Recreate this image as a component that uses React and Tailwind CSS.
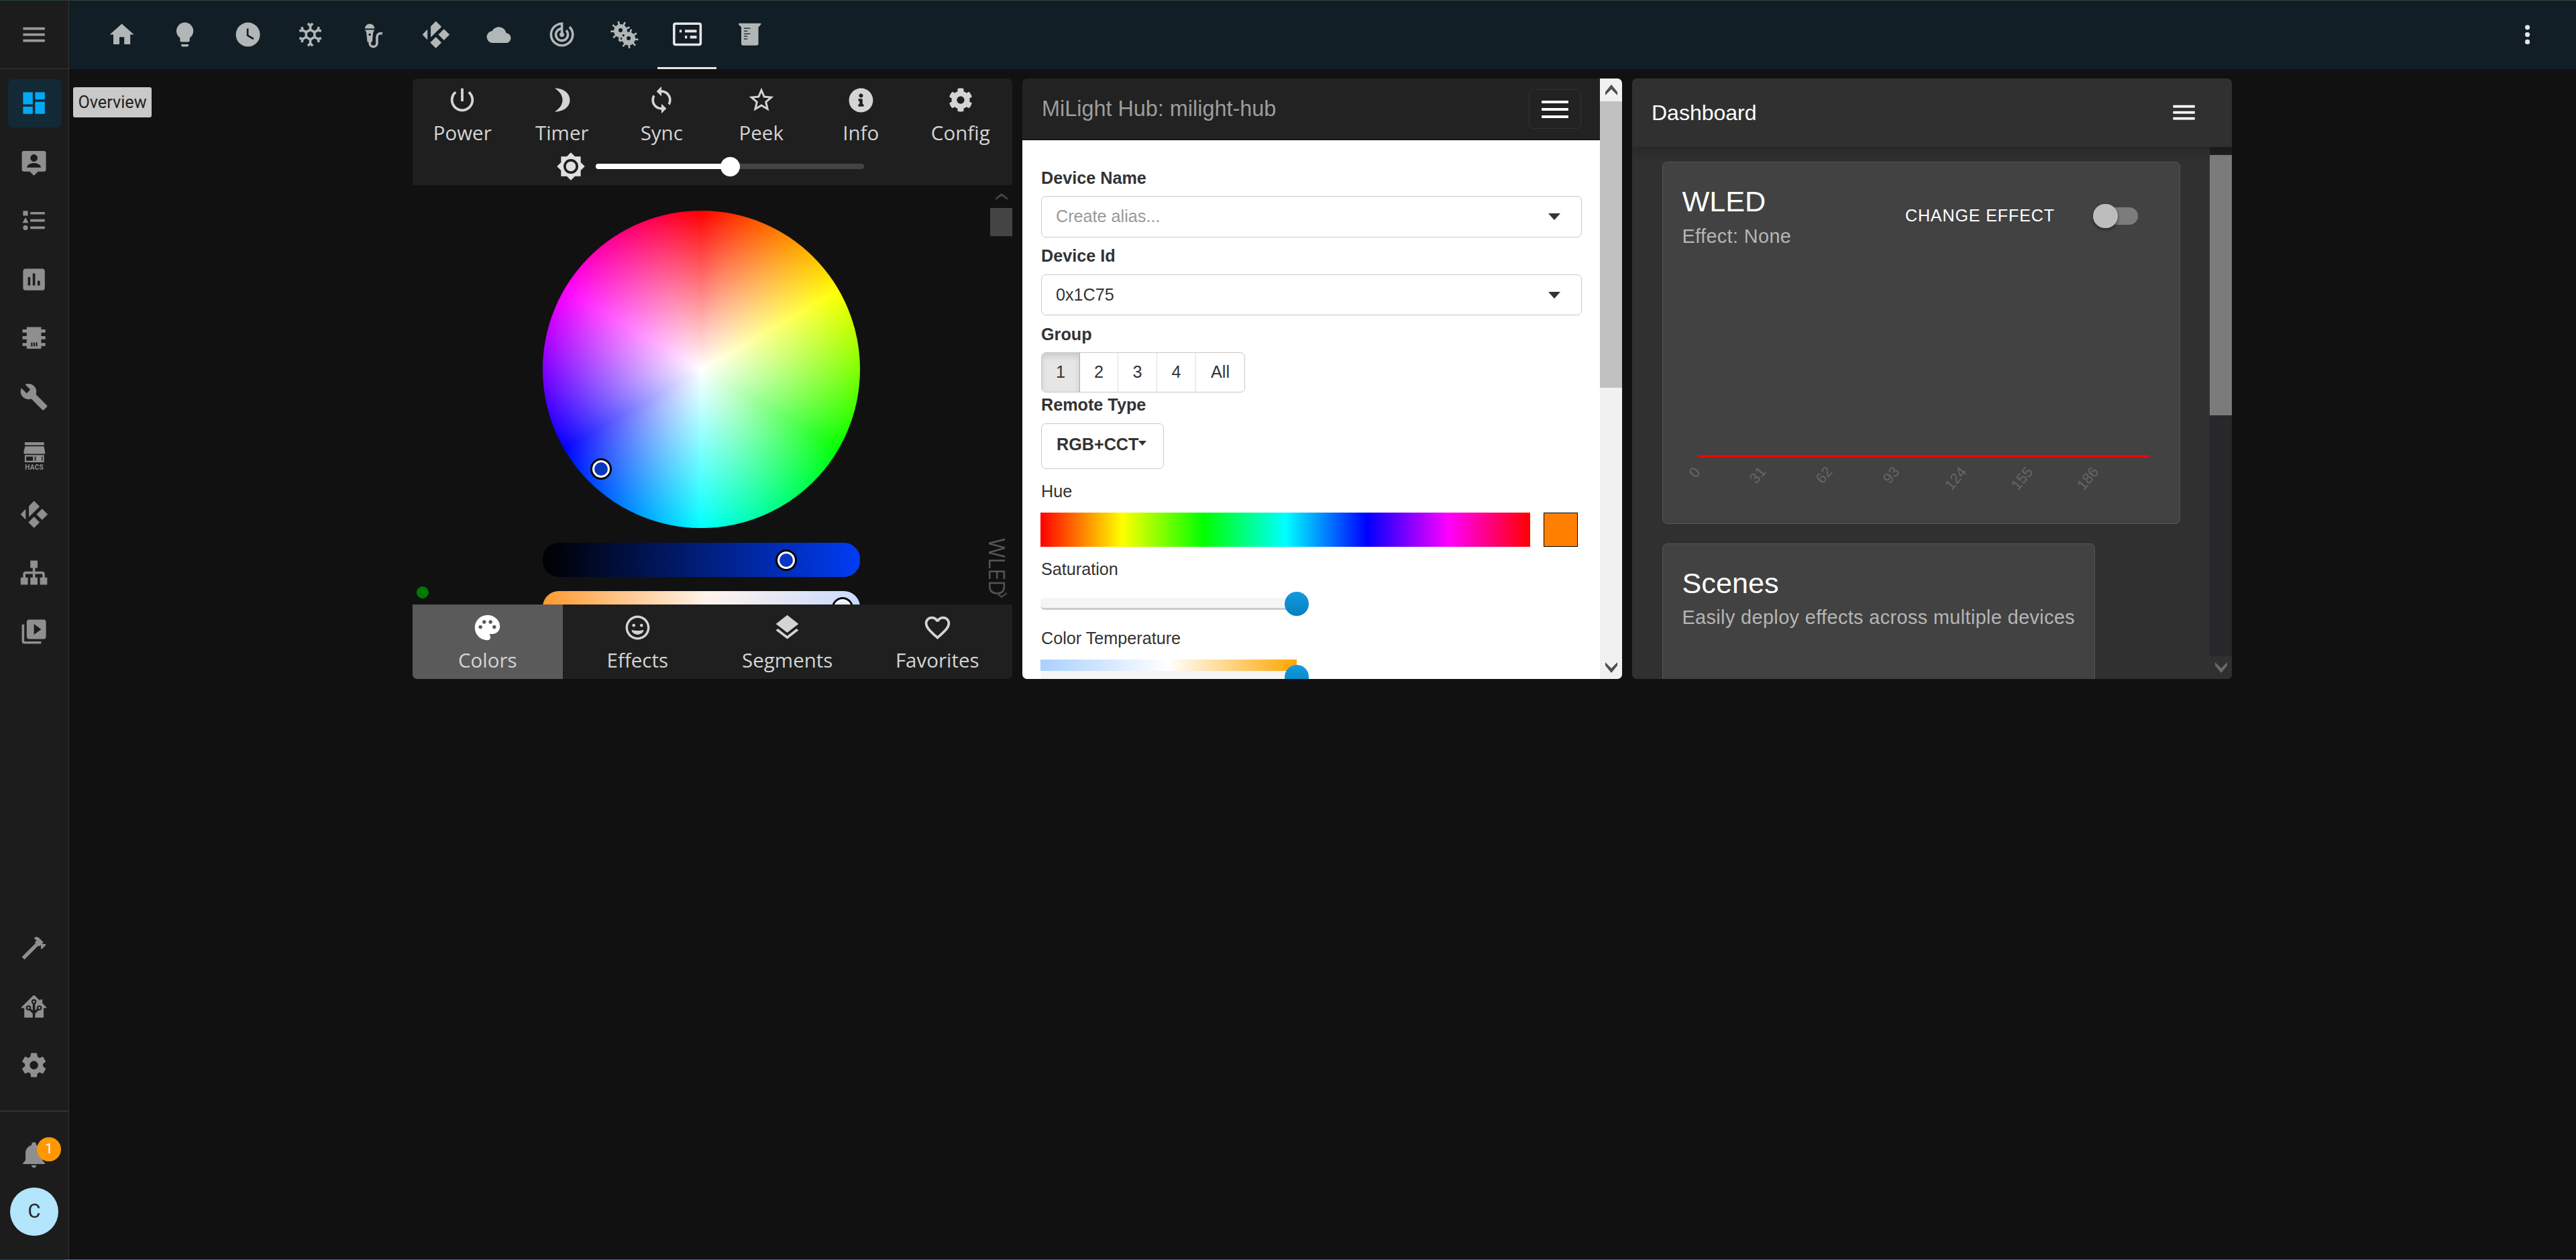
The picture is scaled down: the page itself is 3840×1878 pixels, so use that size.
import React from 'react';
import { MdPowerSettingsNew, MdSync, MdStarBorder, MdPalette, MdLayers, MdFavoriteBorder } from 'react-icons/md';
import { FaInfoCircle, FaCog, FaRegGrin } from 'react-icons/fa';

const P = {
  home: 'M10,20V14H14V20H19V12H22L12,3L2,12H5V20H10Z',
  bulb: 'M12,2A7,7 0 0,0 5,9C5,11.38 6.19,13.47 8,14.74V17A1,1 0 0,0 9,18H15A1,1 0 0,0 16,17V14.74C17.81,13.47 19,11.38 19,9A7,7 0 0,0 12,2M9,21A1,1 0 0,0 10,22H14A1,1 0 0,0 15,21V20H9V21Z',
  clock: 'M12,2A10,10 0 0,0 2,12A10,10 0 0,0 12,22A10,10 0 0,0 22,12A10,10 0 0,0 12,2M16.2,16.2L11,13V7H12.5V12.2L17,14.9L16.2,16.2Z',
  snow: 'M20.79,13.95L18.46,14.57L16.46,13.44V10.56L18.46,9.43L20.79,10.05L21.31,8.12L19.54,7.65L20,5.88L18.07,5.36L17.45,7.69L15.45,8.82L13,7.38V5.12L14.71,3.41L13.29,2L12,3.29L10.71,2L9.29,3.41L11,5.12V7.38L8.5,8.82L6.5,7.69L5.92,5.36L4,5.88L4.47,7.65L2.7,8.12L3.22,10.05L5.55,9.43L7.55,10.56V13.45L5.55,14.58L3.22,13.96L2.7,15.89L4.47,16.36L4,18.12L5.93,18.64L6.55,16.31L8.55,15.18L11,16.62V18.88L9.29,20.59L10.71,22L12,20.71L13.29,22L14.7,20.59L13,18.88V16.62L15.5,15.17L17.5,16.3L18.12,18.63L20,18.12L19.53,16.35L21.3,15.88L20.79,13.95M9.5,10.56L12,9.11L14.5,10.56V13.44L12,14.89L9.5,13.44V10.56Z',
  mic: 'M9,3A4,4 0 0,1 13,7H5A4,4 0 0,1 9,3M11.84,9.82L11,18H10V19A2,2 0 0,0 12,21A2,2 0 0,0 14,19V14A4,4 0 0,1 18,10H20L19,11L20,12H18A2,2 0 0,0 16,14V19A4,4 0 0,1 12,23A4,4 0 0,1 8,19V18H7L6.16,9.82C5.67,9.32 5.31,8.7 5.13,8H12.87C12.69,8.7 12.33,9.32 11.84,9.82M9,11A1,1 0 0,0 8,12A1,1 0 0,0 9,13A1,1 0 0,0 10,12A1,1 0 0,0 9,11Z',
  radar: 'M19.07,4.93L17.66,6.34C19.1,7.79 20,9.79 20,12A8,8 0 0,1 12,20A8,8 0 0,1 4,12C4,7.92 7.05,4.56 11,4.07V6.09C8.16,6.57 6,9.03 6,12A6,6 0 0,0 12,18A6,6 0 0,0 18,12C18,10.34 17.33,8.84 16.24,7.76L14.83,9.17C15.55,9.9 16,10.9 16,12A4,4 0 0,1 12,16A4,4 0 0,1 8,12C8,10.14 9.28,8.59 11,8.14V10.28C10.4,10.63 10,11.26 10,12A2,2 0 0,0 12,14A2,2 0 0,0 14,12C14,11.26 13.6,10.62 13,10.28V2H12A10,10 0 0,0 2,12A10,10 0 0,0 12,22A10,10 0 0,0 22,12C22,9.24 20.88,6.74 19.07,4.93Z',
  menu: 'M3,6H21V8H3V6M3,11H21V13H3V11M3,16H21V18H3V16Z',
  dots: 'M12,16A2,2 0 0,1 14,18A2,2 0 0,1 12,20A2,2 0 0,1 10,18A2,2 0 0,1 12,16M12,10A2,2 0 0,1 14,12A2,2 0 0,1 12,14A2,2 0 0,1 10,12A2,2 0 0,1 12,10M12,4A2,2 0 0,1 14,6A2,2 0 0,1 12,8A2,2 0 0,1 10,6A2,2 0 0,1 12,4Z',
  dash: 'M13,3V9H21V3M13,21H21V11H13M3,21H11V15H3M3,13H11V3H3V13Z',
  list: 'M5,9.5L7.5,14H2.5L5,9.5M3,4H7V8H3V4M5,20A2,2 0 0,0 7,18A2,2 0 0,0 5,16A2,2 0 0,0 3,18A2,2 0 0,0 5,20M9,5V7H21V5H9M9,19H21V17H9V19M9,13H21V11H9V13Z',
  chart: 'M9 17H7V10H9V17M13 17H11V7H13V17M17 17H15V13H17V17M19 3H5C3.9 3 3 3.9 3 5V19C3 20.1 3.9 21 5 21H19C20.1 21 21 20.1 21 19V5C21 3.9 20.1 3 19 3Z',
  wrench: 'M22.7,19L13.6,9.9C14.5,7.6 14,4.9 12.1,3C10.1,1 7.1,0.6 4.7,1.7L9,6L6,9L1.6,4.7C0.4,7.1 0.9,10.1 2.9,12.1C4.8,14 7.5,14.5 9.8,13.6L18.9,22.7C19.3,23.1 19.9,23.1 20.3,22.7L22.6,20.4C23.1,20 23.1,19.3 22.7,19Z',
  sitemap: 'M9,2V8H11V11H5C3.89,11 3,11.89 3,13V16H1V22H7V16H5V13H11V16H9V22H15V16H13V13H19V16H17V22H23V16H21V13C21,11.89 20.1,11 19,11H13V8H15V2H9Z',
  play: 'M4,6H2V20A2,2 0 0,0 4,22H18V20H4V6M20,2H8A2,2 0 0,0 6,4V16A2,2 0 0,0 8,18H20A2,2 0 0,0 22,16V4A2,2 0 0,0 20,2M12,14.5V5.5L18,10L12,14.5Z',
  hammer: 'M2 19.63L13.43 8.2L12.72 7.5L14.14 6.07L12 3.89C13.2 2.7 15.09 2.7 16.27 3.89L19.87 7.5L18.45 8.91H21.29L22 9.62L18.45 13.21L17.74 12.5V9.62L16.27 11.04L15.56 10.33L4.13 21.76L2 19.63Z',
  ha: 'M21.8,13H20V21H13V17.67L15.79,14.88L16.5,15C17.66,15 18.6,14.06 18.6,12.9C18.6,11.74 17.66,10.8 16.5,10.8A2.1,2.1 0 0,0 14.4,12.9L14.5,13.61L13,15.13V9.65C13.66,9.29 14.1,8.6 14.1,7.8A2.1,2.1 0 0,0 12,5.7A2.1,2.1 0 0,0 9.9,7.8C9.9,8.6 10.34,9.29 11,9.65V15.13L9.5,13.61L9.6,12.9A2.1,2.1 0 0,0 7.5,10.8A2.1,2.1 0 0,0 5.4,12.9A2.1,2.1 0 0,0 7.5,15L8.21,14.88L11,17.67V21H4V13H2.25C1.83,13 1.42,13 1.42,12.79C1.43,12.57 1.85,12.15 2.28,11.72L11,3C11.33,2.67 11.67,2.33 12,2.33C12.33,2.33 12.67,2.67 13,3L17,7V6H19V9L21.78,11.78C22.18,12.18 22.59,12.59 22.6,12.8C22.6,13 22.2,13 21.8,13M7.5,12A0.9,0.9 0 0,1 8.4,12.9A0.9,0.9 0 0,1 7.5,13.8A0.9,0.9 0 0,1 6.6,12.9A0.9,0.9 0 0,1 7.5,12M16.5,12C17,12 17.4,12.4 17.4,12.9C17.4,13.4 17,13.8 16.5,13.8A0.9,0.9 0 0,1 15.6,12.9A0.9,0.9 0 0,1 16.5,12M12,6.9C12.5,6.9 12.9,7.3 12.9,7.8C12.9,8.3 12.5,8.7 12,8.7C11.5,8.7 11.1,8.3 11.1,7.8C11.1,7.3 11.5,6.9 12,6.9Z',
  cog: 'M12,15.5A3.5,3.5 0 0,1 8.5,12A3.5,3.5 0 0,1 12,8.5A3.5,3.5 0 0,1 15.5,12A3.5,3.5 0 0,1 12,15.5M19.43,12.97C19.47,12.65 19.5,12.33 19.5,12C19.5,11.67 19.47,11.34 19.43,11L21.54,9.37C21.73,9.22 21.78,8.95 21.66,8.73L19.66,5.27C19.54,5.05 19.27,4.96 19.05,5.05L16.56,6.05C16.04,5.66 15.5,5.32 14.87,5.07L14.5,2.42C14.46,2.18 14.25,2 14,2H10C9.75,2 9.54,2.18 9.5,2.42L9.13,5.07C8.5,5.32 7.96,5.66 7.44,6.05L4.95,5.05C4.73,4.96 4.46,5.05 4.34,5.27L2.34,8.73C2.21,8.95 2.27,9.22 2.46,9.37L4.57,11C4.53,11.34 4.5,11.67 4.5,12C4.5,12.33 4.53,12.65 4.57,12.97L2.46,14.63C2.27,14.78 2.21,15.05 2.34,15.27L4.34,18.73C4.46,18.95 4.73,19.03 4.95,18.95L7.44,17.94C7.96,18.34 8.5,18.68 9.13,18.93L9.5,21.58C9.54,21.82 9.75,22 10,22H14C14.25,22 14.46,21.82 14.5,21.58L14.87,18.93C15.5,18.67 16.04,18.34 16.56,17.94L19.05,18.95C19.27,19.03 19.54,18.95 19.66,18.73L21.66,15.27C21.78,15.05 21.73,14.78 21.54,14.63L19.43,12.97Z',
  bell: 'M21,19V20H3V19L5,17V11C5,7.9 7.03,5.17 10,4.29C10,4.19 10,4.1 10,4A2,2 0 0,1 12,2A2,2 0 0,1 14,4C14,4.1 14,4.19 14,4.29C16.97,5.17 19,7.9 19,11V17L21,19M14,21A2,2 0 0,1 12,23A2,2 0 0,1 10,21',
  bright: 'M12,8A4,4 0 0,0 8,12A4,4 0 0,0 12,16A4,4 0 0,0 16,12A4,4 0 0,0 12,8M12,18A6,6 0 0,1 6,12A6,6 0 0,1 12,6A6,6 0 0,1 18,12A6,6 0 0,1 12,18M20,8.69V4H15.31L12,0.69L8.69,4H4V8.69L0.69,12L4,15.31V20H8.69L12,23.31L15.31,20H20V15.31L23.31,12L20,8.69Z',
  cloud: 'M19.35,10.03C18.67,6.59 15.64,4 12,4C9.11,4 6.6,5.64 5.35,8.03C2.34,8.36 0,10.9 0,14A6,6 0 0,0 6,20H19A5,5 0 0,0 24,15C24,12.36 21.95,10.22 19.35,10.03Z',
};

function Svg({ children, className = 'w-[43.2px] h-[43.2px]' }) {
  return <svg viewBox="0 0 24 24" className={`${className} fill-current shrink-0 overflow-visible`}>{children}</svg>;
}
function I({ d, className }) {
  return <Svg className={className}><path d={d} /></Svg>;
}

function Kodi() {
  return (
    <Svg>
      <g stroke="currentColor" strokeWidth="0.5" strokeLinejoin="round">
        <path d="M1.2 12L4.9 8.1V15.9Z" />
        <path d="M12.1 1.1L16.5 5.5L8.1 13.8V5.1Z" />
        <path d="M18.76 7.6L23.2 12L18.76 16.4L14.4 12Z" />
        <path d="M12.1 14.2L16.5 18.65L12.1 23L7.7 18.65Z" />
      </g>
    </Svg>
  );
}

function Bacteria() {
  const teeth = (cx, cy, r, n, off) =>
    Array.from({ length: n }, (_, i) => {
      const a = off + (i * Math.PI * 2) / n;
      return (
        <line key={`${cx}-${i}`} x1={cx} y1={cy} x2={cx + r * Math.cos(a)} y2={cy + r * Math.sin(a)} stroke="currentColor" strokeWidth="1.5" />
      );
    });
  return (
    <Svg>
      {teeth(8.9, 9, 8.2, 9, 0.3)}
      {teeth(15.6, 15.3, 8, 9, 0.1)}
      <circle cx="8.9" cy="9" r="5.6" />
      <circle cx="15.6" cy="15.3" r="5.6" />
      <circle cx="8.9" cy="8.4" r="1.7" className="fill-[#121e25]" />
      <circle cx="15.6" cy="15" r="1.7" className="fill-[#121e25]" />
      <circle cx="11.3" cy="12.6" r="0.9" className="fill-[#121e25]" />
    </Svg>
  );
}

function CardIcon() {
  return (
    <Svg>
      <rect x="1" y="2.9" width="22" height="17.4" rx="1.2" fill="none" stroke="currentColor" strokeWidth="2" />
      <rect x="5.5" y="8" width="1.8" height="2.2" />
      <rect x="10" y="8" width="9.7" height="2.2" />
      <rect x="10" y="12.9" width="1.8" height="2.3" />
      <rect x="14.3" y="12.9" width="5.4" height="2.3" />
    </Svg>
  );
}

function Beaker() {
  return (
    <Svg>
      <path d="M2.8 2.6H21.3V3.6L19.2 5.8V19.5A1.5 1.5 0 0 1 17.7 21H6.5A1.5 1.5 0 0 1 5 19.5V5.8L2.8 3.6Z" />
      <g className="fill-[#121e25]">
        <rect x="7.2" y="6.4" width="5.2" height="0.7" />
        <rect x="7.2" y="8.7" width="3" height="0.7" />
        <rect x="7.2" y="11" width="5.2" height="0.7" />
        <rect x="7.2" y="13" width="3" height="0.7" />
        <rect x="7.2" y="15.2" width="3" height="0.7" />
      </g>
    </Svg>
  );
}

function CloudIcon() {
  return (
    <Svg>
      <g transform="translate(2,2.3) scale(0.833)">
        <path d={P.cloud} />
      </g>
    </Svg>
  );
}

function PersonPin() {
  return (
    <Svg>
      <path fillRule="evenodd" d="M3.8 2.8H20.2A1.8 1.8 0 0 1 22 4.6V18A1.8 1.8 0 0 1 20.2 19.8H15.4L12 23.2L8.6 19.8H3.8A1.8 1.8 0 0 1 2 18V4.6A1.8 1.8 0 0 1 3.8 2.8ZM12 5.6A3 3 0 1 0 12 11.6A3 3 0 1 0 12 5.6ZM6.2 16.6H17.8C17.8 14 14.4 12.8 12 12.8C9.6 12.8 6.2 14 6.2 16.6Z" />
    </Svg>
  );
}

function Chip() {
  return (
    <Svg>
      <path fillRule="evenodd" d="M6 3H18V5H21.5V7.6H18V10.6H21.5V13.2H18V16.2H21.5V18.8H18V21H6V18.8H2.5V16.2H6V13.2H2.5V10.6H6V7.6H2.5V5H6ZM9.6 15.8V19H10.8V15.8ZM11.6 15.8V19H12.8V15.8ZM13.6 15.8V19H14.8V15.8Z" />
    </Svg>
  );
}

function Hacs() {
  return (
    <Svg>
      <rect x="4.4" y="1.2" width="16" height="2.4" />
      <path d="M4.6 4.6H20.2L21.2 9.2V10.9H3.6V9.2Z" />
      <path fillRule="evenodd" d="M4.4 11.8H20.4V17.8H4.4ZM5.6 13V16.6H11.2V13ZM12.6 13V16.6H13.6V13ZM18.4 13V16.6H19.2V13Z" />
      <text x="12.3" y="23.9" textAnchor="middle" fontSize="5.6" fontWeight="700" fontFamily="Roboto, sans-serif" letterSpacing="0.15">HACS</text>
    </Svg>
  );
}

const headerTabs = [
  <I d={P.home} />, <I d={P.bulb} />, <I d={P.clock} />, <I d={P.snow} />, <I d={P.mic} />, <Kodi />,
  <CloudIcon />, <I d={P.radar} />, <Bacteria />, <CardIcon />, <Beaker />,
];

const navTop = [
  <PersonPin />, <I d={P.list} />, <I d={P.chart} />, <Chip />, <I d={P.wrench} />, <Hacs />, <Kodi />, <I d={P.sitemap} />, <I d={P.play} />,
];

function Sidebar() {
  return (
    <aside className="w-[103px] shrink-0 flex flex-col bg-[#1c1c1c] border-r border-[#333] text-[#8f8f8f]">
      <div className="h-[102px] shrink-0 flex items-center justify-center border-b border-[#333] text-[#9a9a9a]">
        <I d={P.menu} />
      </div>
      <nav className="flex flex-col pt-[7px]">
        <div className="h-[87.5px] flex items-center justify-center">
          <div className="w-[79px] h-[72px] rounded-[7px] bg-[#132a36] flex items-center justify-center text-[#03a9f4]">
            <I d={P.dash} />
          </div>
        </div>
        {navTop.map((icon, i) => (
          <div key={i} className="h-[87.5px] flex items-center justify-center">{icon}</div>
        ))}
      </nav>
      <div className="flex-1" />
      <div className="flex flex-col">
        <div className="h-[87.5px] flex items-center justify-center"><I d={P.hammer} /></div>
        <div className="h-[87.5px] flex items-center justify-center"><I d={P.ha} /></div>
        <div className="h-[87.5px] flex items-center justify-center"><I d={P.cog} /></div>
      </div>
      <div className="mt-[23px] h-[2px] bg-[#333]" />
      <div className="relative h-[87.5px] mt-[20px] flex items-center justify-center">
        <I d={P.bell} />
        <div className="absolute left-[55px] top-[18px] w-[36px] h-[36px] rounded-full bg-[#ff9800] text-white flex items-center justify-center text-[21px] font-['Roboto',sans-serif]">1</div>
      </div>
      <div className="mt-[6px] mb-[35px] ml-[15px] w-[72px] h-[72px] rounded-full bg-[#b3e5fc] text-[#222] flex items-center justify-center text-[29px] font-['Roboto',sans-serif]">C</div>
    </aside>
  );
}

function Header() {
  return (
    <header className="h-[102px] shrink-0 bg-[#121e25] flex items-center justify-between pl-[32.2px] pr-[50.7px] text-[#b1b6b7]">
      <div className="flex h-full">
        {headerTabs.map((icon, i) => (
          <div key={i} className={`relative w-[93.6px] h-full flex items-center justify-center ${i === 9 ? 'text-[#e6e6e6]' : ''}`}>
            {icon}
            {i === 9 && <div className="absolute bottom-0 left-[2.8px] w-[88px] h-[3px] bg-[#e6e6e6]" />}
          </div>
        ))}
      </div>
      <div className="text-[#e6e6e6]"><I d={P.dots} /></div>
    </header>
  );
}

function TopItem({ icon, label }) {
  return (
    <div className="flex flex-col items-center">
      <div className="h-[64px] flex items-center justify-center">{icon}</div>
      <div className="h-[36px] -mt-[1px] flex items-center text-[29.5px] leading-none">{label}</div>
    </div>
  );
}

function BottomItem({ icon, label, active }) {
  return (
    <div className={`flex flex-col items-center pt-[13px] ${active ? 'bg-[#5a5a5a]' : ''}`}>
      <div className={`h-[42px] flex items-center justify-center ${active ? 'text-white' : ''}`}>{icon}</div>
      <div className="h-[36px] mt-[10px] flex items-center text-[29.5px] leading-none">{label}</div>
    </div>
  );
}

function Handle({ inner, className }) {
  return (
    <div className={`absolute w-[32px] h-[32px] rounded-full border-[3px] border-black bg-white flex items-center justify-center ${className}`}>
      <div className={`w-[20px] h-[20px] rounded-full ${inner}`} />
    </div>
  );
}

function WledPanel() {
  return (
    <section className="w-[894px] h-[895px] rounded-[7px] overflow-hidden flex flex-col font-['Open_Sans',sans-serif] text-[#d4d4d4]">
      <div className="h-[159px] shrink-0 bg-[#1f1f1f] flex flex-col">
        <div className="grid grid-cols-6 w-[891px] h-[109px]">
          <TopItem label="Power" icon={<MdPowerSettingsNew className="w-[46px] h-[46px]" />} />
          <TopItem label="Timer" icon={
            <svg viewBox="0 0 24 36" className="w-[24px] h-[36px] fill-current"><path d="M1 0.5C13 0.5 23.5 7 23.5 18C23.5 29 13 35.5 1 35.5C8 31 12.5 25 12.5 18C12.5 11 8 5 1 0.5Z" /></svg>
          } />
          <TopItem label="Sync" icon={<MdSync className="w-[44px] h-[44px]" />} />
          <TopItem label="Peek" icon={<MdStarBorder className="w-[44px] h-[44px]" />} />
          <TopItem label="Info" icon={<FaInfoCircle className="w-[37px] h-[37px]" />} />
          <TopItem label="Config" icon={<FaCog className="w-[36px] h-[36px]" />} />
        </div>
        <div className="flex items-center h-[44px] pl-[214px]">
          <I d={P.bright} className="w-[44px] h-[44px] text-[#e0e0e0]" />
          <div className="relative ml-[15px] w-[400px] h-[8px] rounded-full bg-[#444]">
            <div className="h-full w-[200px] rounded-full bg-white" />
            <div className="absolute left-[186px] top-[-10px] w-[29px] h-[29px] rounded-full bg-white" />
          </div>
        </div>
      </div>

      <div className="relative flex-1 overflow-hidden bg-[#111]">
        <div className="flex flex-col pl-[194px] pt-[38px]">
          <div className="relative w-[473px] h-[473px] rounded-full bg-[conic-gradient(#f00,#ff0,#0f0,#0ff,#00f,#f0f,#f00)]">
            <div className="absolute inset-0 rounded-full bg-[radial-gradient(closest-side,#fff,#fff0)]" />
            <Handle inner="bg-[#0b36c4]" className="left-[71px] top-[369px]" />
          </div>
          <div className="relative mt-[22px] w-[473px] h-[51px] rounded-[24px] bg-[linear-gradient(to_right,#000,#003cf5)]">
            <Handle inner="bg-[#0b36c4]" className="left-[347px] top-[10px]" />
          </div>
          <div className="relative mt-[21px] w-[473px] h-[51px] rounded-[24px] bg-[linear-gradient(to_right,#ff9a2e,#fff4ec_52%,#c9d9ff)]">
            <Handle inner="bg-[#e6edff]" className="left-[431px] top-[9px]" />
          </div>
        </div>
        <div className="absolute left-[6px] top-[598px] w-[18px] h-[18px] rounded-full bg-[#007a00]" />
        <svg viewBox="0 0 18 10" className="absolute right-[7px] top-[12px] w-[18px] h-[10px] fill-[#444]"><path d="M9 0L18 7V10L9 4L0 10V7Z" /></svg>
        <div className="absolute right-0 top-[34px] w-[33px] h-[42px] bg-[#444]" />
        <div className="absolute right-[7px] top-[526px] h-[92px] flex items-center leading-none [writing-mode:vertical-rl] text-[32px] text-[#555] tracking-[-0.5px]">WLED</div>
        <svg viewBox="0 0 18 10" className="absolute right-[8px] top-[606px] w-[16px] h-[10px] fill-[#444]"><path d="M9 10L18 3V0L9 6L0 0V3Z" /></svg>
      </div>

      <div className="h-[111px] shrink-0 bg-[#1f1f1f] grid grid-cols-4">
        <BottomItem active label="Colors" icon={<MdPalette className="w-[45px] h-[45px]" />} />
        <BottomItem label="Effects" icon={<FaRegGrin className="w-[37px] h-[37px]" />} />
        <BottomItem label="Segments" icon={<MdLayers className="w-[45px] h-[45px]" />} />
        <BottomItem label="Favorites" icon={<MdFavoriteBorder className="w-[45px] h-[45px]" />} />
      </div>
    </section>
  );
}

function Label({ children, className = '', bold = true }) {
  return <div className={`h-[36px] leading-[36px] text-[25.2px] ${bold ? 'font-bold' : ''} text-[#333] ${className}`}>{children}</div>;
}

function SelectBox({ children, muted, className = '' }) {
  return (
    <div className={`w-[806px] flex items-center justify-between pl-[21px] pr-[31px] border border-[#c8c8c8] rounded-[7px] text-[25.2px] ${muted ? 'text-[#999]' : 'text-[#333]'} ${className}`}>
      <span>{children}</span>
      <svg viewBox="0 0 18 10" className="w-[18px] h-[10px] fill-[#333]"><path d="M0 0H18L9 10Z" /></svg>
    </div>
  );
}

function Slider({ className = '' }) {
  return (
    <div className={`relative w-[382px] h-[18px] rounded-[6px] bg-[#f5f5f5] border-b-[3px] border-[#ccc] ${className}`}>
      <div className="absolute left-[364px] top-[-9px] w-[36px] h-[36px] rounded-full bg-[linear-gradient(to_bottom,#149bdf,#0480be)]" />
    </div>
  );
}

function Chevron({ up, className }) {
  return (
    <svg viewBox="0 0 18 16" className={className}>
      <path d={up ? 'M9 0L18 11V16L9 7L0 16V11Z' : 'M9 16L18 5V0L9 9L0 0V5Z'} />
    </svg>
  );
}

function MilightPanel() {
  return (
    <section className="w-[894px] h-[895px] rounded-[7px] overflow-hidden flex font-['Liberation_Sans',sans-serif]">
      <div className="w-[861px] flex flex-col">
        <div className="h-[92px] shrink-0 bg-[#222] border-b border-[#080808] flex items-center justify-between pl-[29px] pr-[28px]">
          <span className="text-[32.4px] text-[#9d9d9d]">MiLight Hub: milight-hub</span>
          <div className="w-[78px] h-[59px] rounded-[7px] border border-[#333] flex flex-col items-center justify-center gap-[7px]">
            <div className="w-[40px] h-[4px] bg-white rounded-[1px]" />
            <div className="w-[40px] h-[4px] bg-white rounded-[1px]" />
            <div className="w-[40px] h-[4px] bg-white rounded-[1px]" />
          </div>
        </div>
        <div className="flex-1 overflow-hidden bg-white">
          <div className="pl-[28px] pt-[38px] flex flex-col items-start">
            <Label>Device Name</Label>
            <SelectBox muted className="mt-[9px] h-[62px]">Create alias...</SelectBox>
            <Label className="mt-[9px]">Device Id</Label>
            <SelectBox className="mt-[10px] h-[61px]">0x1C75</SelectBox>
            <Label className="mt-[10px]">Group</Label>
            <div className="mt-[9px] h-[60px] flex border border-[#c8c8c8] rounded-[7px] text-[25.2px] text-[#333] overflow-hidden">
              <div className="w-[57px] flex items-center justify-center bg-[#e6e6e6] shadow-[inset_0_5px_9px_rgba(0,0,0,0.125)] border-r border-[#adadad]">1</div>
              <div className="w-[57px] flex items-center justify-center border-r border-[#ddd]">2</div>
              <div className="w-[58px] flex items-center justify-center border-r border-[#ddd]">3</div>
              <div className="w-[58px] flex items-center justify-center border-r border-[#ddd]">4</div>
              <div className="w-[72px] flex items-center justify-center">All</div>
            </div>
            <Label>Remote Type</Label>
            <div className="mt-[10px] w-[183px] h-[68px] border border-[#c8c8c8] rounded-[7px] flex items-start pl-[22px] pt-[12px] text-[25.2px] font-bold text-[#333]">
              <span>RGB+CCT</span>
              <svg viewBox="0 0 12 7" className="mt-[13px] w-[12px] h-[7px] fill-[#333]"><path d="M0 0H12L6 7Z" /></svg>
            </div>
            <Label bold={false} className="mt-[15px]">Hue</Label>
            <div className="mt-[14px] -ml-px flex gap-[20px]">
              <div className="w-[730px] h-[51px] bg-[linear-gradient(to_right,#f00,#ff0,#0f0,#0ff,#00f,#f0f,#f00)]" />
              <div className="w-[51px] h-[51px] bg-[#ff8000] border border-black" />
            </div>
            <Label bold={false} className="mt-[15px]">Saturation</Label>
            <Slider className="mt-[25px] -ml-px" />
            <Label bold={false} className="mt-[24px]">Color Temperature</Label>
            <div className="mt-[14px] -ml-px w-[382px] h-[17px] bg-[linear-gradient(to_right,#a8d0ff,#fff_50%,#ffa500)]" />
            <Slider className="-ml-px" />
          </div>
        </div>
      </div>
      <div className="w-[33px] flex flex-col bg-[#f1f1f1]">
        <div className="h-[34px] flex items-center justify-center">
          <Chevron up className="w-[18px] h-[16px] fill-[#505050]" />
        </div>
        <div className="h-[427px] bg-[#c1c1c1]" />
        <div className="flex-1" />
        <div className="h-[34px] flex items-center justify-center">
          <Chevron className="w-[18px] h-[16px] fill-[#505050]" />
        </div>
      </div>
    </section>
  );
}

const ticks = [
  ['0', 47, 54], ['31', 141, 58], ['62', 240, 58], ['93', 340, 58], ['124', 436, 63], ['155', 535, 63], ['186', 633, 63],
];

function DashboardPanel() {
  return (
    <section className="w-[894px] h-[895px] rounded-[7px] overflow-hidden flex flex-col bg-[#303030] font-['Liberation_Sans',sans-serif]">
      <div className="relative z-10 h-[102px] shrink-0 bg-[#303030] shadow-[0_4px_14px_rgba(0,0,0,0.28)] flex items-center justify-between pl-[29px] pr-[50px]">
        <span className="text-[32px] text-white">Dashboard</span>
        <div className="text-white"><I d={P.menu} /></div>
      </div>
      <div className="flex-1 flex overflow-hidden">
        <div className="flex-1 overflow-hidden pl-[44.5px] pt-[22px]">
          <div className="w-[772.5px] h-[540px] rounded-[7px] bg-[#424242] border border-[#555] flex flex-col">
            <div className="flex justify-between pl-[29px] pr-[62px]">
              <div>
                <div className="mt-[33px] h-[50px] leading-[50px] text-[43.2px] text-white">WLED</div>
                <div className="mt-[9px] h-[36px] leading-[36px] text-[28.8px] tracking-[0.4px] text-[#b6b6b6]">Effect: None</div>
              </div>
              <div className="mt-[62px] h-[36px] flex items-center">
                <span className="text-[25.2px] tracking-[0.8px] text-white">CHANGE EFFECT</span>
                <div className="relative ml-[57px] w-[67px] h-[26px]">
                  <div className="absolute left-[22px] top-0 w-[45px] h-[26px] rounded-full bg-[#7c7c7c]" />
                  <div className="absolute left-0 top-[-5px] w-[37px] h-[36px] rounded-full bg-[#bdbdbd] shadow-[0_2px_4px_rgba(0,0,0,0.5)]" />
                </div>
              </div>
            </div>
            <svg viewBox="0 0 770 130" className="mt-auto w-[770px] h-[130px]">
              <rect x="52.5" y="28.5" width="673" height="3" fill="#f00" />
              {ticks.map(([t, x, y]) => (
                <text key={t} x={x} y={y} transform={`rotate(-50 ${x} ${y})`} textAnchor="middle" dominantBaseline="central" fontSize="22" fill="#666" fontFamily="Liberation Sans, sans-serif">{t}</text>
              ))}
            </svg>
          </div>
          <div className="mt-[29px] w-[645px] h-[300px] rounded-[7px] bg-[#424242] border border-[#555] pl-[29px]">
            <div className="mt-[33px] h-[50px] leading-[50px] text-[43.2px] text-white">Scenes</div>
            <div className="mt-[6px] h-[40px] leading-[40px] text-[28.8px] tracking-[0.4px] text-[#b6b6b6] whitespace-nowrap">Easily deploy effects across multiple devices</div>
          </div>
        </div>
        <div className="w-[33px] flex flex-col bg-[#28282a]">
          <div className="h-[12px] bg-[#202020]" />
          <div className="h-[388px] bg-[#7b7b7b]" />
          <div className="flex-1" />
          <div className="h-[34px] bg-[#303030] flex items-center justify-center">
            <Chevron className="w-[18px] h-[16px] fill-[#6a6a6a]" />
          </div>
        </div>
      </div>
    </section>
  );
}

export default function App() {
  return (
    <div className="relative w-full h-[1878px] flex flex-col overflow-hidden bg-[#111] font-['Roboto',sans-serif]">
      <div className="h-px shrink-0 bg-[#2b4238]" />
      <div className="flex-1 flex min-h-0">
        <Sidebar />
        <div className="flex-1 flex flex-col min-w-0">
          <Header />
          <main className="flex gap-[15px] pl-[512px] pt-[14px]">
            <WledPanel />
            <MilightPanel />
            <DashboardPanel />
          </main>
        </div>
      </div>
      <div className="h-px shrink-0 flex">
        <div className="w-[96px] bg-[#0c4a6e]" />
        <div className="flex-1 bg-[#3f6f8f]" />
      </div>
      <div className="absolute left-[109px] top-[130px] h-[45px] px-[7.5px] flex items-center rounded-[3px] bg-[#c9c9c9] text-[25.2px] text-[#222]">Overview</div>
    </div>
  );
}
